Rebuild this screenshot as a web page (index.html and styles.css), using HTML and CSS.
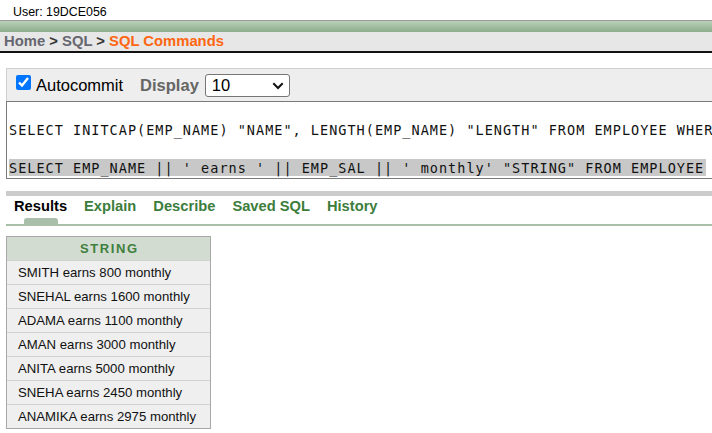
FILE: index.html
```html
<!DOCTYPE html>
<html>
<head>
<meta charset="utf-8">
<link rel="stylesheet" href="styles.css">
</head>
<body>
<div class="user">User: 19DCE056</div>
<div class="band"></div>
<div class="crumbs"><span class="crumb">Home</span> <span class="sep">&gt;</span> <span class="crumb">SQL</span> <span class="sep">&gt;</span> <span class="current">SQL Commands</span></div>
<div class="main">
  <div class="toolbar">
    <input type="checkbox" class="check" checked>
    <span class="auto">Autocommit</span>
    <span class="display">Display</span>
    <div class="select"><span>10</span><svg class="chev" width="12" height="8" viewBox="0 0 12 8"><path d="M1.3 1.3 L6 6 L10.7 1.3" stroke="#111" stroke-width="2" fill="none"/></svg></div>
  </div>
  <div class="editor">
    <div class="line"> </div>
    <div class="line">SELECT INITCAP(EMP_NAME) "NAME", LENGTH(EMP_NAME) "LENGTH" FROM EMPLOYEE WHERE EMP_SAL &gt; 1000</div>
    <div class="line"> </div>
    <div class="line"><span class="sel">SELECT EMP_NAME || ' earns ' || EMP_SAL || ' monthly' "STRING" FROM EMPLOYEE</span></div>
  </div>
  <div class="divider"></div>
  <div class="tabs">
    <div class="tab active">Results<span class="pip"></span></div>
    <div class="tab">Explain</div>
    <div class="tab">Describe</div>
    <div class="tab">Saved SQL</div>
    <div class="tab">History</div>
  </div>
  <div class="results">
    <div class="rhead">STRING</div>
    <div class="row">SMITH earns 800 monthly</div>
    <div class="row">SNEHAL earns 1600 monthly</div>
    <div class="row">ADAMA earns 1100 monthly</div>
    <div class="row">AMAN earns 3000 monthly</div>
    <div class="row">ANITA earns 5000 monthly</div>
    <div class="row">SNEHA earns 2450 monthly</div>
    <div class="row">ANAMIKA earns 2975 monthly</div>
  </div>
</div>
</body>
</html>
```
FILE: styles.css
```css
* { box-sizing: border-box; }
html, body { margin: 0; padding: 0; }
body {
  font-family: "Liberation Sans", Arial, sans-serif;
  background: #fff;
  color: #000;
  overflow: hidden;
  width: 712px;
  height: 433px;
}
.user {
  height: 20px;
  padding: 5px 0 0 13px;
  font-size: 12.4px;
  line-height: 15px;
}
.band {
  height: 12px;
  border-top: 1px solid #9a9a9a;
  background: linear-gradient(#b9d1b9, #8dac8d);
}
.crumbs {
  height: 21px;
  background: #e6e7e6;
  border-bottom: 2px solid #111;
  padding-left: 4px;
  font-size: 14.8px;
  font-weight: bold;
  line-height: 19px;
  white-space: nowrap;
}
.crumb { color: #666670; }
.sep { color: #333; }
.current { color: #ff6611; }
.main {
  margin: 15px -60px 0 6px;
}
.toolbar {
  height: 33px;
  border-top: 1px solid #cfcfcf;
  border-left: 1px solid #cfcfcf;
  background: #eee;
  display: flex;
  align-items: center;
  padding-left: 9px;
  font-size: 16.5px;
}
.check {
  width: 15px;
  height: 15px;
  margin: 0 5px 5px 0;
}
.auto { margin-right: 17px; }
.display {
  font-weight: bold;
  color: #666;
  margin-right: 6px;
}
.select {
  width: 85px;
  height: 23px;
  border: 1px solid #767676;
  border-radius: 3px;
  background: #fff;
  display: flex;
  align-items: center;
  justify-content: space-between;
  padding: 0 5px 0 6px;
}
.chev { display: block; margin-top: 1px; }
.editor {
  border: 1px solid #7a7a7a;
  font-family: "DejaVu Sans Mono", monospace;
  font-size: 13.5px;
  letter-spacing: 1.02px;
  line-height: 19px;
  padding-left: 2px;
  color: #111;
}
.line {
  height: 19px;
  white-space: pre;
  overflow: hidden;
}
.sel {
  background: #c8c8c8;
  padding: 1px 2px 0;
  margin-left: -2px;
}
.divider {
  height: 5px;
  background: #ccc;
  margin-top: 12px;
}
.tabs {
  display: flex;
  align-items: flex-start;
  gap: 17px;
  padding: 1px 0 0 8px;
  border-bottom: 2px solid #a9c0a9;
}
.tab {
  font-size: 14.7px;
  font-weight: bold;
  color: #3c7d3c;
  line-height: 18px;
}
.tab.active {
  color: #000;
  display: flex;
  flex-direction: column;
  align-items: center;
}
.pip {
  width: 34px;
  height: 6px;
  margin-top: 3px;
  background: #a9bfa9;
  border-radius: 3px 3px 0 0;
}
.results {
  margin-top: 10px;
  width: 205px;
  border: 1px solid #a8a8a8;
}
.rhead {
  height: 23px;
  line-height: 23px;
  background: #d3dcd0;
  text-align: center;
  font-weight: bold;
  font-size: 13px;
  letter-spacing: 1.6px;
  padding-left: 1.6px;
  color: #3f7f3f;
}
.row {
  height: 24px;
  border-top: 1px solid #d2d2d2;
  background: #efefef;
  line-height: 23px;
  font-size: 13.2px;
  padding-left: 11px;
  color: #111;
  white-space: nowrap;
}
```
